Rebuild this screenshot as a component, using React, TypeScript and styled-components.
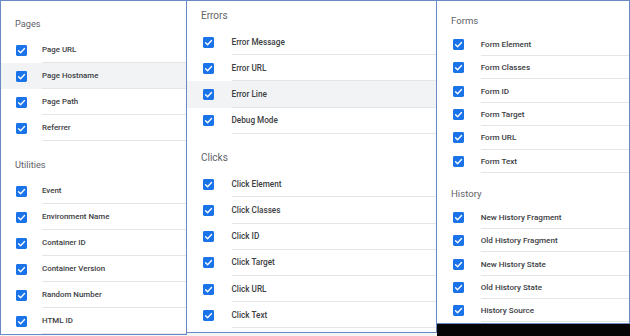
import React from "react";
import styled, { createGlobalStyle } from "styled-components";

const GlobalStyle = createGlobalStyle`
  html, body { margin: 0; padding: 0; background: #fff; }
  body { font-family: Roboto, "Liberation Sans", Arial, sans-serif; }
`;

type Item = { label: string; hover?: boolean };
type Section = { title: string; headH: number; items: Item[] };
type Metrics = {
  rowH: number;
  boxX: number;
  labelX: number;
  size: number;
  headSize: number;
  headBottom: number;
};

const columns: {
  width: number;
  height: number;
  left: boolean;
  pad: number;
  below: string;
  m: Metrics;
  sections: Section[];
}[] = [
  {
    width: 187,
    height: 335,
    left: true,
    pad: 0,
    below: "#f4f5f7",
    m: { rowH: 26, boxX: 15, labelX: 41, size: 7.9, headSize: 9.2, headBottom: 7 },
    sections: [
      {
        title: "Pages",
        headH: 36,
        items: [
          { label: "Page URL" },
          { label: "Page Hostname", hover: true },
          { label: "Page Path" },
          { label: "Referrer" },
        ],
      },
      {
        title: "Utilities",
        headH: 37,
        items: [
          { label: "Event" },
          { label: "Environment Name" },
          { label: "Container ID" },
          { label: "Container Version" },
          { label: "Random Number" },
          { label: "HTML ID" },
        ],
      },
    ],
  },
  {
    width: 250,
    height: 333,
    left: false,
    pad: 4,
    below: "#f4f5f7",
    m: { rowH: 26.2, boxX: 16, labelX: 44.5, size: 8.2, headSize: 10, headBottom: 7 },
    sections: [
      {
        title: "Errors",
        headH: 28,
        items: [
          { label: "Error Message" },
          { label: "Error URL" },
          { label: "Error Line", hover: true },
          { label: "Debug Mode" },
        ],
      },
      {
        title: "Clicks",
        headH: 37.5,
        items: [
          { label: "Click Element" },
          { label: "Click Classes" },
          { label: "Click ID" },
          { label: "Click Target" },
          { label: "Click URL" },
          { label: "Click Text" },
        ],
      },
    ],
  },
  {
    width: 193,
    height: 324,
    left: false,
    pad: 0,
    below: "#050505",
    m: { rowH: 23.4, boxX: 16, labelX: 43.7, size: 8.1, headSize: 9.6, headBottom: 5.5 },
    sections: [
      {
        title: "Forms",
        headH: 31.6,
        items: [
          { label: "Form Element" },
          { label: "Form Classes" },
          { label: "Form ID" },
          { label: "Form Target" },
          { label: "Form URL" },
          { label: "Form Text" },
        ],
      },
      {
        title: "History",
        headH: 32.6,
        items: [
          { label: "New History Fragment" },
          { label: "Old History Fragment" },
          { label: "New History State" },
          { label: "Old History State" },
          { label: "History Source" },
        ],
      },
    ],
  },
];

function Check() {
  return (
    <svg width="11" height="11" viewBox="0 0 12 12">
      <rect x="0" y="0" width="12" height="12" rx="1.6" fill="#1a73e8" />
      <path d="M2.8 6.3 L5 8.4 L9.3 3.9" fill="none" stroke="#fff" strokeWidth="1.5" strokeLinecap="round" strokeLinejoin="round" />
    </svg>
  );
}

export default function App() {
  return (
    <>
      <GlobalStyle />
      <Screen>
        {columns.map((col, ci) => (
          <Column key={ci} $width={col.width}>
            <Panel $height={col.height} $left={col.left} $pad={col.pad}>
              {col.sections.map((s) => (
                <div key={s.title}>
                  <Header $h={s.headH} $size={col.m.headSize} $bottom={col.m.headBottom}>
                    {s.title}
                  </Header>
                  {s.items.map((it) => (
                    <Row key={it.label} $h={col.m.rowH} $hover={!!it.hover}>
                      <BoxCell $x={col.m.boxX} $w={col.m.labelX}>
                        <Check />
                      </BoxCell>
                      <Label $size={col.m.size}>{it.label}</Label>
                    </Row>
                  ))}
                </div>
              ))}
            </Panel>
            <Filler $bg={col.below} />
          </Column>
        ))}
      </Screen>
    </>
  );
}

const Screen = styled.div`
  display: flex;
  width: 630px;
  height: 336px;
  overflow: hidden;
  background: #fff;
`;

const Column = styled.div<{ $width: number }>`
  width: ${(p) => p.$width}px;
  display: flex;
  flex-direction: column;
  flex-shrink: 0;
`;

const Panel = styled.div<{ $height: number; $left: boolean; $pad: number }>`
  box-sizing: border-box;
  height: ${(p) => p.$height}px;
  border: 1px solid #6a8ac4;
  border-left-width: ${(p) => (p.$left ? 1 : 0)}px;
  padding-bottom: ${(p) => p.$pad}px;
  background: #fff;
  overflow: hidden;
`;

const Filler = styled.div<{ $bg: string }>`
  flex: 1;
  background: ${(p) => p.$bg};
`;

const Header = styled.div<{ $h: number; $size: number; $bottom: number }>`
  box-sizing: border-box;
  height: ${(p) => p.$h}px;
  display: flex;
  align-items: flex-end;
  padding: 0 0 ${(p) => p.$bottom}px 14px;
  font-size: ${(p) => p.$size}px;
  line-height: 12px;
  color: #5f6368;
`;

const Row = styled.div<{ $h: number; $hover: boolean }>`
  display: flex;
  height: ${(p) => p.$h}px;
  background: ${(p) => (p.$hover ? "#f1f3f4" : "transparent")};
`;

const BoxCell = styled.div<{ $x: number; $w: number }>`
  box-sizing: border-box;
  width: ${(p) => p.$w}px;
  padding-left: ${(p) => p.$x}px;
  display: flex;
  align-items: center;
  svg { display: block; }
`;

const Label = styled.div<{ $size: number }>`
  flex: 1;
  display: flex;
  align-items: center;
  border-bottom: 1px solid #e3e5e8;
  font-size: ${(p) => p.$size}px;
  font-weight: 500;
  color: #3c4043;
  white-space: nowrap;
`;
